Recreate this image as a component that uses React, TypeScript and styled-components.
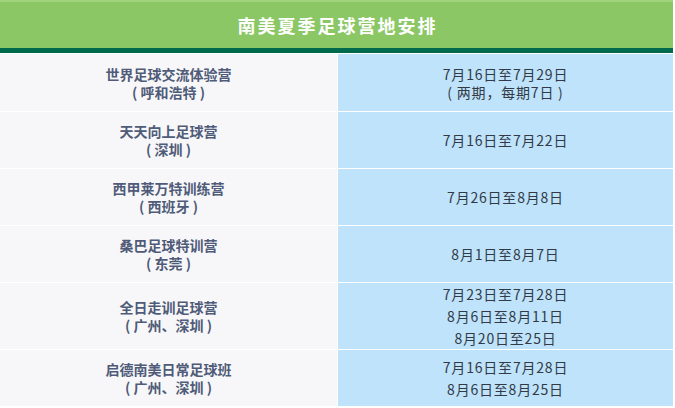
import React from "react";
import styled, { createGlobalStyle } from "styled-components";

const GlobalStyle = createGlobalStyle`
  html, body {
    margin: 0;
    padding: 0;
    background: #ffffff;
  }
  body {
    font-family: "Noto Sans CJK SC", "Noto Sans", sans-serif;
  }
`;

const Wrapper = styled.div`
  width: 673px;
  display: flex;
  flex-direction: column;
`;

const Title = styled.div`
  height: 46px;
  border-top: 2px solid #9ed37c;
  background: #8cc766;
  color: #ffffff;
  font-size: 18px;
  font-weight: 700;
  letter-spacing: 2px;
  display: flex;
  align-items: center;
  justify-content: center;
  padding-left: 2px;
`;

// 제목 아래 진한 초록 띠
const TitleBar = styled.div`
  height: 5px;
  background: #006a4c;
  border-bottom: 1px solid #ffffff;
`;

const Table = styled.div`
  display: grid;
  grid-template-columns: 337px 1fr;
  grid-template-rows: 57px 56px 56px 56px 66px 56px;
  column-gap: 1px;
  row-gap: 1px;
  background: #ffffff;
`;

const Cell = styled.div<{ $lh: number }>`
  display: flex;
  flex-direction: column;
  align-items: center;
  justify-content: center;
  font-size: 14px;
  line-height: ${(p) => p.$lh}px;
  text-align: center;
  white-space: pre;
`;

const NameCell = styled(Cell)`
  background: #f7f7f9;
  color: #4f5b78;
  font-weight: 700;
`;

const DateCell = styled(Cell)`
  background: #bee3fa;
  color: #323a47;
  letter-spacing: 0.8px;
`;

type Camp = { name: string; place: string; dates: string[]; lh: number };

const camps: Camp[] = [
  { name: "世界足球交流体验营", place: "( 呼和浩特 )", dates: ["7月16日至7月29日", "( 两期，每期7日 )"], lh: 18 },
  { name: "天天向上足球营", place: "( 深圳 )", dates: ["7月16日至7月22日"], lh: 18 },
  { name: "西甲莱万特训练营", place: "( 西班牙 )", dates: ["7月26日至8月8日"], lh: 18 },
  { name: "桑巴足球特训营", place: "( 东莞 )", dates: ["8月1日至8月7日"], lh: 18 },
  { name: "全日走训足球营", place: "( 广州、深圳 )", dates: ["7月23日至7月28日", "8月6日至8月11日", "8月20日至25日"], lh: 22 },
  { name: "启德南美日常足球班", place: "( 广州、深圳 )", dates: ["7月16日至7月28日", "8月6日至8月25日"], lh: 22 },
];

export default function App() {
  return (
    <>
      <GlobalStyle />
      <Wrapper>
        <Title>南美夏季足球营地安排</Title>
        <TitleBar />
        <Table>
          {camps.map((c) => (
            <React.Fragment key={c.name}>
              <NameCell $lh={18}>
                <span>{c.name}</span>
                <span>{c.place}</span>
              </NameCell>
              <DateCell $lh={c.lh}>
                {c.dates.map((d) => (
                  <span key={d}>{d}</span>
                ))}
              </DateCell>
            </React.Fragment>
          ))}
        </Table>
      </Wrapper>
    </>
  );
}
